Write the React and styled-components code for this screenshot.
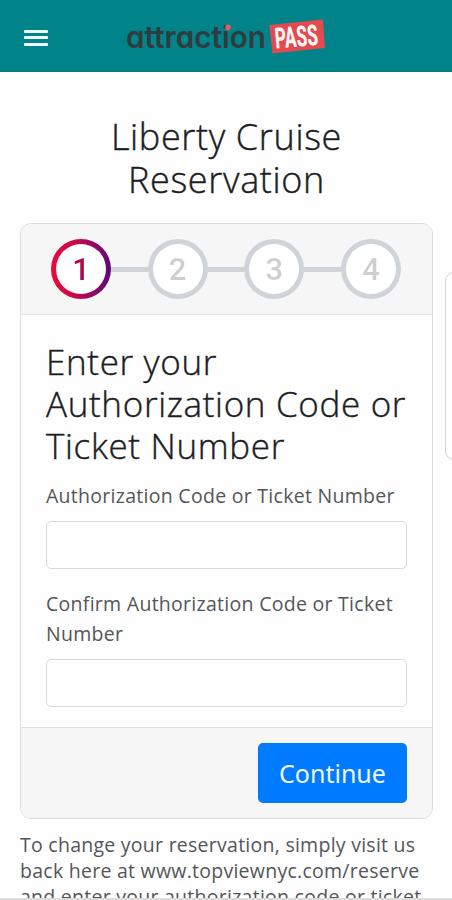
import React, { useState } from "react";
import styled, { createGlobalStyle } from "styled-components";

const GlobalStyle = createGlobalStyle`
  * {
    box-sizing: border-box;
  }
  body {
    margin: 0;
    background: #fefefe;
    font-family: "Open Sans", "Noto Sans", sans-serif;
    color: #1c1d1f;
    overflow: hidden;
  }
`;

const Page = styled.div`
  position: relative;
  width: 452px;
  height: 900px;
  overflow: hidden;
  display: flex;
  flex-direction: column;
`;

const TopBar = styled.header`
  flex: none;
  display: flex;
  align-items: center;
  height: 72px;
  padding-left: 24px;
  background: #018489;
  border-bottom: 1px solid #027a7f;
`;

const MenuButton = styled.button`
  display: flex;
  flex-direction: column;
  gap: 3.5px;
  width: 24px;
  margin: 4px 78px 0 0;
  padding: 0;
  border: 0;
  background: none;
`;

const MenuLine = styled.span`
  height: 3px;
  border-radius: 1px;
  background: #eefafa;
`;

const LogoSvg = styled.svg`
  overflow: visible;
`;

const Content = styled.main`
  flex: none;
  padding: 43px 19px 0 20px;
`;

const Title = styled.h1`
  margin: 0 0 22px;
  font-size: 36px;
  font-weight: 300;
  line-height: 43px;
  letter-spacing: 0.65px;
  text-align: center;
  -webkit-text-stroke: 0.4px currentColor;
`;

const Card = styled.section`
  border: 1px solid #dcdddf;
  border-radius: 11px;
  background: #fefefe;
  overflow: hidden;
`;

const Steps = styled.div`
  display: flex;
  align-items: center;
  height: 91px;
  padding: 0 31px 0 30px;
  background: #f6f6f7;
  border-bottom: 1px solid #e0e1e3;
`;

const Step = styled.div`
  flex: none;
  display: grid;
  place-items: center;
  width: 60px;
  height: 60px;
  border: 5px solid transparent;
  border-radius: 50%;
  background: ${(p) =>
    p.$active
      ? "linear-gradient(#fff, #fff) padding-box, linear-gradient(90deg, #f0083a, #b80a50 50%, #5b0878) border-box"
      : "linear-gradient(#fff, #fff) padding-box, linear-gradient(#d0d4d9, #d0d4d9) border-box"};
`;

const StepNumber = styled.span`
  font-family: Roboto, sans-serif;
  font-size: 31px;
  font-weight: 500;
  line-height: 1;
  color: transparent;
  background: ${(p) =>
    p.$active ? "linear-gradient(90deg, #c10a49, #960a5c)" : "#cdcfd2"};
  background-clip: text;
`;

const StepLine = styled.span`
  flex: 1;
  height: 5px;
  background: #d0d4d9;
`;

const CardBody = styled.div`
  padding: 26px 25px 20px;
`;

const Heading = styled.h2`
  margin: 0 0 14px;
  font-size: 35px;
  font-weight: 300;
  line-height: 42px;
  letter-spacing: 0.66px;
  white-space: nowrap;
  -webkit-text-stroke: 0.4px currentColor;
`;

const Label = styled.label`
  display: block;
  font-size: 19.5px;
  font-weight: 400;
  line-height: 30px;
  letter-spacing: 0.28px;
  color: #535659;
  white-space: nowrap;
`;

const Input = styled.input`
  display: block;
  width: 100%;
  height: 48px;
  margin: 10px 0 ${(p) => p.$gap || "0"};
  padding: 0 14px;
  border: 1px solid #d8dbde;
  border-radius: 5px;
  background: #fff;
  font: inherit;
  font-size: 19px;
`;

const CardFooter = styled.div`
  display: flex;
  justify-content: flex-end;
  height: 91px;
  padding: 15px 25px;
  background: #f6f6f6;
  border-top: 1px solid #dfe0e1;
`;

const ContinueButton = styled.button`
  width: 149px;
  height: 60px;
  padding: 0;
  border: 0;
  border-radius: 5px;
  background: #007bff;
  color: #eef7ff;
  font-family: "Noto Sans", sans-serif;
  font-size: 25px;
`;

const Note = styled.p`
  margin: 13px 0 0;
  font-size: 19.5px;
  font-weight: 400;
  line-height: 26px;
  letter-spacing: 0.26px;
  color: #535659;
  white-space: nowrap;
`;

// edge of the feedback tab, mostly off screen
const SideTab = styled.div`
  position: absolute;
  top: 272px;
  right: -14px;
  width: 21px;
  height: 188px;
  border: 1px solid #d3d3d5;
  border-radius: 9px;
  background: #fefefe;
`;

const BottomEdge = styled.div`
  position: absolute;
  left: 0;
  right: 0;
  bottom: 0;
  height: 2px;
  background: #dcdcdc;
`;

function Logo() {
  return (
    <LogoSvg width="202" height="40" viewBox="0 0 202 40">
      <text
        x="0"
        y="32"
        textLength="140"
        lengthAdjust="spacingAndGlyphs"
        fontFamily="Inter, sans-serif"
        fontSize="30"
        fontWeight="600"
        fill="#303b3e"
        style={{ fontFeatureSettings: '"cv11"' }}
      >
        attraction
      </text>
      <circle cx="102" cy="11.500" r="2.900" fill="#d95d5d" />
      <path d="M143.300 9 L197 3.500 L199 32 L146.500 37.500 Z" fill="#e24a50" />
      <g transform="translate(149.800 32.500) rotate(-5)">
        <text
          textLength="43"
          lengthAdjust="spacingAndGlyphs"
          fontFamily="Roboto, sans-serif"
          fontSize="29"
          fontWeight="800"
          fill="#fff5f3"
        >
          PASS
        </text>
      </g>
    </LogoSvg>
  );
}

const steps = [1, 2, 3, 4];

export default function App() {
  const [step, setStep] = useState(1);
  const [code, setCode] = useState("");
  const [confirm, setConfirm] = useState("");

  return (
    <>
      <GlobalStyle />
      <Page>
        <TopBar>
          <MenuButton aria-label="Menu">
            <MenuLine />
            <MenuLine />
            <MenuLine />
          </MenuButton>
          <Logo />
        </TopBar>
        <Content>
          <Title>
            Liberty Cruise
            <br />
            Reservation
          </Title>
          <Card>
            <Steps>
              {steps.map((n) => (
                <React.Fragment key={n}>
                  {n > 1 && <StepLine />}
                  <Step $active={n === step}>
                    <StepNumber $active={n === step}>{n}</StepNumber>
                  </Step>
                </React.Fragment>
              ))}
            </Steps>
            <CardBody>
              <Heading>
                Enter your
                <br />
                Authorization Code or
                <br />
                Ticket Number
              </Heading>
              <Label htmlFor="code">Authorization Code or Ticket Number</Label>
              <Input
                id="code"
                $gap="20px"
                value={code}
                onChange={(e) => setCode(e.target.value)}
              />
              <Label htmlFor="confirm">
                Confirm Authorization Code or Ticket
                <br />
                Number
              </Label>
              <Input
                id="confirm"
                value={confirm}
                onChange={(e) => setConfirm(e.target.value)}
              />
            </CardBody>
            <CardFooter>
              <ContinueButton onClick={() => setStep(Math.min(step + 1, 4))}>
                Continue
              </ContinueButton>
            </CardFooter>
          </Card>
          <Note>
            To change your reservation, simply visit us
            <br />
            back here at www.topviewnyc.com/reserve
            <br />
            and enter your authorization code or ticket
          </Note>
        </Content>
        <SideTab />
        <BottomEdge />
      </Page>
    </>
  );
}
